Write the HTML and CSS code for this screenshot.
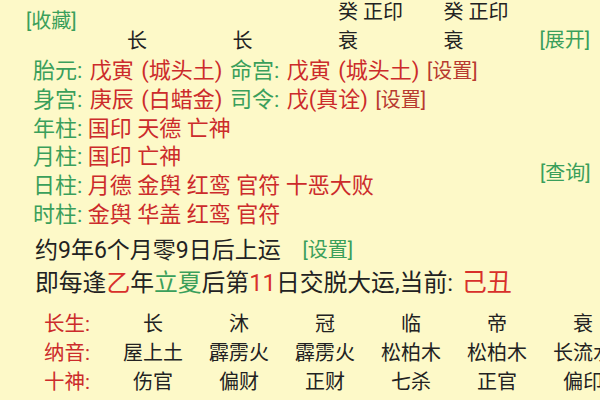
FILE: index.html
```html
<!DOCTYPE html>
<html lang="zh">
<head>
<meta charset="utf-8">
<link rel="stylesheet" href="styles.css">
</head>
<body>
<div class="page">
  <div class="top">
    <div class="fav"><span class="link-g">[收藏]</span></div>
    <div class="cols">
      <div class="col"><div class="cell"></div><div class="cell">长</div></div>
      <div class="col"><div class="cell"></div><div class="cell">长</div></div>
      <div class="col"><div class="cell">癸 正印</div><div class="cell">衰</div></div>
      <div class="col last"><div class="cell">癸 正印</div><div class="cell">衰</div></div>
    </div>
    <div class="expand"><span class="link-g">[展开]</span></div>
  </div>

  <div class="info">
    <div class="lines">
      <div class="line wide"><span class="g">胎元:</span> <span class="r">戊寅 (城头土)</span> <span class="g">命宫:</span> <span class="r">戊寅 (城头土)</span> <span class="link-r">[设置]</span></div>
      <div class="line wide"><span class="g">身宫:</span> <span class="r">庚辰 (白蜡金)</span> <span class="g">司令:</span> <span class="r">戊(真诠)</span> <span class="link-r">[设置]</span></div>
      <div class="line"><span class="g">年柱:</span> <span class="r">国印 天德 亡神</span></div>
      <div class="line"><span class="g">月柱:</span> <span class="r">国印 亡神</span></div>
      <div class="line"><span class="g">日柱:</span> <span class="r">月德 金舆 红鸾 官符 十恶大败</span></div>
      <div class="line"><span class="g">时柱:</span> <span class="r">金舆 华盖 红鸾 官符</span></div>
    </div>
    <div class="query"><span class="link-g">[查询]</span></div>
  </div>

  <div class="yun">
    <div class="yline y1">约9年6个月零9日后上运 <span class="link-g set2">[设置]</span></div>
    <div class="yline y2">即每逢<span class="r2">乙</span>年<span class="g">立夏</span>后第<span class="r2">11</span>日交脱大运,当前: <span class="cur">己丑</span></div>
  </div>

  <div class="table">
    <div class="lab">长生:</div><div class="v">长</div><div class="v">沐</div><div class="v">冠</div><div class="v">临</div><div class="v">帝</div><div class="v">衰</div>
    <div class="lab">纳音:</div><div class="v">屋上土</div><div class="v">霹雳火</div><div class="v">霹雳火</div><div class="v">松柏木</div><div class="v">松柏木</div><div class="v">长流水</div>
    <div class="lab">十神:</div><div class="v">伤官</div><div class="v">偏财</div><div class="v">正财</div><div class="v">七杀</div><div class="v">正官</div><div class="v">偏印</div>
  </div>
</div>
</body>
</html>
```

FILE: styles.css
```css
html, body {
  margin: 0;
  padding: 0;
  background: #fdf9c8;
  overflow: hidden;
}
body {
  width: 600px;
  height: 400px;
  font-family: Roboto, "Noto Sans CJK SC", sans-serif;
  color: #222;
}
.page {
  width: 600px;
  height: 400px;
  overflow: hidden;
}
.g { color: #3a9f5b; }
.r { color: #cc2b2b; }
.r2 { color: #d8302b; }
.link-g { color: #3a9f5b; font-size: 20px; }
.link-r { color: #b83a30; font-size: 20px; }

.top {
  display: flex;
  height: 57px;
  white-space: nowrap;
}
.fav {
  flex: none;
  width: 127px;
  padding-left: 26px;
  padding-top: 8px;
  box-sizing: border-box;
  line-height: 26px;
}
.cols {
  flex: none;
  display: flex;
}
.col {
  flex: none;
  width: 105.5px;
  font-size: 20px;
}
.col.last { width: 90px; }
.cell {
  height: 29px;
  line-height: 24px;
}
.expand {
  flex: none;
  margin-left: auto;
  padding-right: 10px;
  padding-top: 27px;
  line-height: 26px;
}

.info {
  display: flex;
  padding-left: 33px;
}
.lines {
  flex: none;
  width: 507px;
}
.line {
  font-size: 22px;
  height: 28.8px;
  line-height: 28.8px;
  white-space: nowrap;
}
.line.wide { word-spacing: 2px; }
.query {
  flex: none;
  padding-top: 103px;
  line-height: 26px;
}
.yun {
  padding-left: 35px;
  padding-top: 5px;
  color: #222;
  white-space: nowrap;
}
.y1 { font-size: 23px; height: 30px; line-height: 30px; }
.y2 { font-size: 23.8px; height: 36px; line-height: 36px; }
.set2 { margin-left: 16px; vertical-align: 1px; }
.cur { color: #d8302b; font-size: 25px; margin-left: 3px; }

.table {
  display: grid;
  grid-template-columns: 66px repeat(6, 86px);
  padding-left: 44px;
  padding-top: 9px;
  font-size: 20px;
  line-height: 29px;
  color: #222;
}
.lab { color: #cc2b2b; font-size: 20.5px; }
.v { text-align: center; white-space: nowrap; }
```
